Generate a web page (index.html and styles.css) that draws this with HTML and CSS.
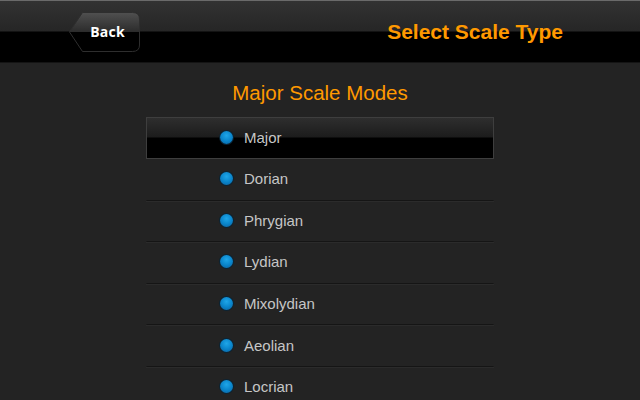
FILE: index.html
```html
<!DOCTYPE html>
<html>
<head>
<meta charset="utf-8">
<link rel="stylesheet" href="styles.css">
</head>
<body>
<header class="topbar">
  <button class="back">
    <svg class="back-shape" width="71" height="40" viewBox="0 0 71 40">
      <defs>
        <linearGradient id="bg" x1="0" y1="0" x2="0" y2="1">
          <stop offset="0" stop-color="#505050"/>
          <stop offset="0.49" stop-color="#2c2c2c"/>
          <stop offset="0.5" stop-color="#000"/>
          <stop offset="1" stop-color="#000"/>
        </linearGradient>
      </defs>
      <path d="M13.5,0.5 H63.5 Q70.5,0.5 70.5,7 V33 Q70.5,39.5 63.5,39.5 H13.5 L0.5,20 Z" fill="url(#bg)" stroke="#2e2e2e" stroke-width="1"/>
    </svg>
    <span class="back-label">Back</span>
  </button>
  <h1 class="title">Select Scale Type</h1>
</header>
<main class="content">
  <h2 class="section">Major Scale Modes</h2>
  <ul class="modes">
    <li class="mode selected"><span class="dot"></span><span>Major</span></li>
    <li class="mode"><span class="dot"></span><span>Dorian</span></li>
    <li class="mode"><span class="dot"></span><span>Phrygian</span></li>
    <li class="mode"><span class="dot"></span><span>Lydian</span></li>
    <li class="mode"><span class="dot"></span><span>Mixolydian</span></li>
    <li class="mode"><span class="dot"></span><span>Aeolian</span></li>
    <li class="mode"><span class="dot"></span><span>Locrian</span></li>
  </ul>
</main>
</body>
</html>
```
FILE: styles.css
```css
* { box-sizing: border-box; }
html, body { margin: 0; padding: 0; }
body {
  width: 640px;
  height: 400px;
  overflow: hidden;
  background: #232323;
  font-family: "Liberation Sans", Arial, sans-serif;
}
.topbar {
  height: 63px;
  display: flex;
  align-items: center;
  padding-left: 69px;
  padding-right: 77px;
  border-top: 1px solid #6a6a6a;
  border-bottom: 1px solid #141414;
  background: linear-gradient(to bottom, #323232 0px, #262626 30px, #000 31px, #000 100%);
}
.back {
  position: relative;
  width: 71px;
  height: 40px;
  padding: 0 0 0 6px;
  margin: 0;
  border: 0;
  background: none;
  display: flex;
  align-items: center;
  justify-content: center;
  cursor: pointer;
}
.back-shape {
  position: absolute;
  left: 0;
  top: 0;
}
.back-label {
  position: relative;
  color: #fff;
  font-family: "Open Sans", "Liberation Sans", sans-serif;
  font-weight: 700;
  font-size: 14px;
  letter-spacing: 0.2px;
}
.title {
  margin: 0 0 0 auto;
  color: #ff9900;
  font-size: 21px;
  font-weight: 700;
}
.content {
  display: flex;
  flex-direction: column;
  align-items: center;
}
.section {
  margin: 0;
  height: 54px;
  padding-top: 6px;
  display: flex;
  align-items: center;
  color: #ff9900;
  font-size: 20.5px;
  font-weight: 400;
}
.modes {
  list-style: none;
  margin: 0;
  padding: 0;
  width: 348px;
}
.mode {
  height: 41.6px;
  display: flex;
  align-items: center;
  gap: 11px;
  padding-left: 73px;
  padding-bottom: 2px;
  border: 1px solid transparent;
  border-bottom: 1px solid #151515;
  box-shadow: 0 1px 0 #2b2b2b;
  color: #c6c6c6;
  font-size: 15px;
}
.mode.selected {
  height: 42px;
  border: 1px solid #3e3e3e;
  background: linear-gradient(to bottom, #2e2e2e 0px, #1c1c1c 19px, #000 20px, #000 100%);
  box-shadow: none;
}
.dot {
  width: 13px;
  height: 13px;
  border-radius: 50%;
  background: radial-gradient(circle at 50% 35%, #1fa6e8 0%, #0a86cc 50%, #0a6fb0 80%, #3cc0f0 100%);
  box-shadow: 0 0 0 1px #0b2434;
}
```
